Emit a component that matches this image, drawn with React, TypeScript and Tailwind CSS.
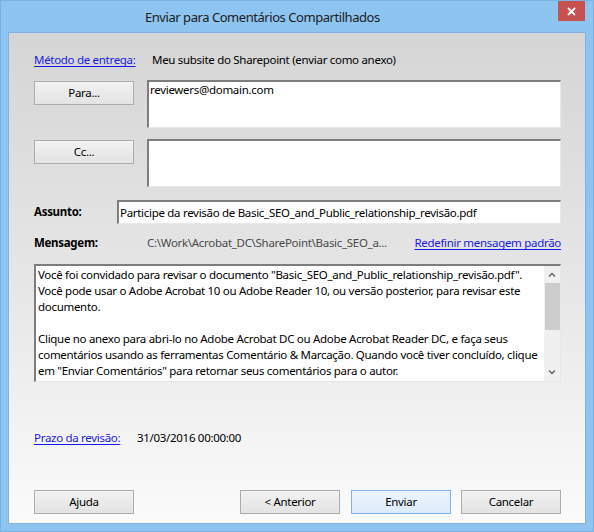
import { FC, ReactNode } from "react";

const font = { fontFamily: '"Noto Sans", "Open Sans", sans-serif' };

const Btn: FC<{ children: ReactNode; primary?: boolean; className?: string }> = ({ children, primary, className }) => (
  <button
    className={
      "h-[24px] w-[100px] text-[11.5px] tracking-[-0.3px] leading-none text-black border " +
      (primary
        ? "border-[#7eb4ea] bg-gradient-to-b from-[#ecf4fc] to-[#dcecfc] "
        : "border-[#adadad] bg-gradient-to-b from-[#f2f2f2] to-[#e3e3e3] ") +
      (className ?? "")
    }
  >
    {children}
  </button>
);

const Link: FC<{ children: ReactNode; className?: string }> = ({ children, className }) => (
  <span className={"text-[#1a1ae6] underline underline-offset-2 " + (className ?? "")}>{children}</span>
);

const inset =
  "bg-white border-t-2 border-l-2 border-[#7d7d7d] border-r border-b border-r-[#e8e8e8] border-b-[#e8e8e8]";

export default function App() {
  return (
    <div
      style={font}
      className="w-[594px] h-[532px] bg-[#8ec4f0] border border-[#78b2e4] flex flex-col text-[11.5px] tracking-[-0.3px] text-black"
    >
      {/* title bar */}
      <div className="h-[31px] flex items-start">
        <div className="flex-1 pl-[144px] pt-[7px] text-[13px] tracking-[-0.45px] text-[#1c1c1c]">
          Enviar para Comentários Compartilhados
        </div>
        <div className="w-[27px] h-[20px] mr-[8px] bg-[#c75050] flex items-center justify-center">
          <svg width="9" height="9" viewBox="0 0 9 9">
            <path d="M1 1 L8 8 M8 1 L1 8" stroke="white" strokeWidth="1.8" />
          </svg>
        </div>
      </div>

      {/* content */}
      <div className="flex-1 mx-[7px] mb-[7px] border border-[#7fb3df] bg-gradient-to-b from-[#d5d5d5] via-[#e6e6e6] to-[#fbfbfb] pl-[25px] pr-[24px] flex flex-col">
        <div className="mt-[19px] h-[16px] flex items-center">
          <Link className="w-[118px]">Método de entrega:</Link>
          <span>Meu subsite do Sharepoint (enviar como anexo)</span>
        </div>

        <div className="mt-[12px] flex gap-[13px]">
          <Btn className="mt-[1px]">Para...</Btn>
          <div className={"flex-1 h-[48px] px-[1px] leading-[16px] " + inset}>reviewers@domain.com</div>
        </div>

        <div className="mt-[11px] flex gap-[13px]">
          <Btn className="mt-[1px]">Cc...</Btn>
          <div className={"flex-1 h-[48px] " + inset} />
        </div>

        <div className="mt-[13px] flex items-center">
          <span className="w-[83px] font-bold">Assunto:</span>
          <div className={"flex-1 h-[24px] px-[1px] flex items-center " + inset}>
            Participe da revisão de Basic_SEO_and_Public_relationship_revisão.pdf
          </div>
        </div>

        <div className="mt-[11px] h-[16px] flex items-center">
          <span className="w-[113px] font-bold">Mensagem:</span>
          <span className="text-[#4a4a4a]">C:\Work\Acrobat_DC\SharePoint\Basic_SEO_a...</span>
          <Link className="ml-auto">Redefinir mensagem padrão</Link>
        </div>

        <div className={"mt-[13px] h-[118px] flex " + inset}>
          <div className="flex-1 pl-[2px] pt-[1px] leading-[16px] whitespace-nowrap overflow-hidden">
            <p>
              Você foi convidado para revisar o documento "Basic_SEO_and_Public_relationship_revisão.pdf".
              <br />
              Você pode usar o Adobe Acrobat 10 ou Adobe Reader 10, ou versão posterior, para revisar este
              <br />
              documento.
            </p>
            <p className="mt-[16px]">
              Clique no anexo para abri-lo no Adobe Acrobat DC ou Adobe Acrobat Reader DC, e faça seus
              <br />
              comentários usando as ferramentas Comentário &amp; Marcação. Quando você tiver concluído, clique
              <br />
              em "Enviar Comentários" para retornar seus comentários para o autor.
            </p>
          </div>
          <div className="w-[16px] bg-[#f0f0f0] flex flex-col items-center">
            <div className="h-[17px] flex items-center justify-center">
              <svg width="8" height="5" viewBox="0 0 8 5">
                <path d="M1 4.5 L4 1.5 L7 4.5" stroke="#606060" strokeWidth="1.4" fill="none" />
              </svg>
            </div>
            <div className="w-[15px] h-[47px] bg-[#cdcdcd]" />
            <div className="flex-1" />
            <div className="h-[17px] flex items-center justify-center">
              <svg width="8" height="5" viewBox="0 0 8 5">
                <path d="M1 0.5 L4 3.5 L7 0.5" stroke="#606060" strokeWidth="1.4" fill="none" />
              </svg>
            </div>
          </div>
        </div>

        <div className="mt-[48px] h-[16px] flex items-center">
          <Link className="w-[103px]">Prazo da revisão:</Link>
          <span>31/03/2016 00:00:00</span>
        </div>

        <div className="mt-[44px] flex">
          <Btn>Ajuda</Btn>
          <Btn className="ml-auto">&lt; Anterior</Btn>
          <Btn primary className="ml-[11px]">Enviar</Btn>
          <Btn className="ml-[10px]">Cancelar</Btn>
        </div>
      </div>
    </div>
  );
}
